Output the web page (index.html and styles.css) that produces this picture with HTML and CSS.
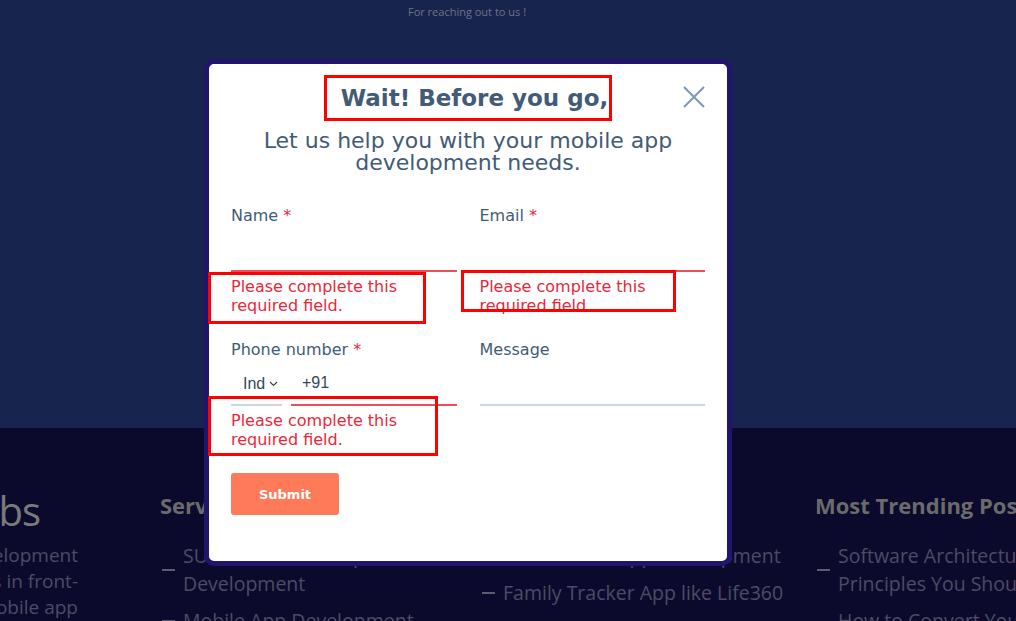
FILE: index.html
```html
<!DOCTYPE html>
<html lang="en">
  <head>
    <meta charset="UTF-8" />
    <title>Contact us</title>
    <link rel="stylesheet" href="styles.css">
  </head>
  <body>
    <section class="hero">
      <p class="thanks">For reaching out to us !</p>
    </section>

    <footer class="site-footer">
      <div class="col col-brand">
        <div class="logo">Mobile Labs</div>
        <p class="about">A software development<br>company that excels in front-<br>end, backend and mobile app</p>
      </div>

      <div class="col col-services">
        <h3>Services</h3>
        <ul class="links">
          <li><span>SUPER APP Marketplace Development</span></li>
          <li><span>Mobile App Development</span></li>
        </ul>
      </div>

      <div class="col">
        <h3>Solutions</h3>
        <ul class="links links-wide">
          <li><span>On-demand App Development</span></li>
          <li><span>Family Tracker App like Life360</span></li>
        </ul>
      </div>

      <div class="col">
        <h3>Most Trending Posts</h3>
        <ul class="links links-posts">
          <li><span>Software Architecture Principles You Should Know</span></li>
          <li><span>How to Convert Your Website into an App</span></li>
        </ul>
      </div>
    </footer>

    <div class="popup">
      <button class="close-btn" type="button" aria-label="Close">
        <svg width="22" height="22" viewBox="0 0 22 22">
          <path d="M1 1 L21 21 M21 1 L1 21" stroke="#7c98b6" stroke-width="2" fill="none" />
        </svg>
      </button>

      <h2 class="popup-title"><span class="mark-title">Wait! Before you go,</span></h2>
      <p class="popup-sub">Let us help you with your mobile app<br>development needs.</p>

      <form class="lead-form" onsubmit="return false">
        <div class="field">
          <label for="name">Name <span class="req">*</span></label>
          <input type="text" id="name" class="invalid" />
          <div class="error error-name">Please complete this required field.</div>
        </div>

        <div class="field">
          <label for="email">Email <span class="req">*</span></label>
          <input type="email" id="email" class="invalid" />
          <div class="error error-email">Please complete this required field.</div>
        </div>

        <div class="field">
          <label for="phone">Phone number <span class="req">*</span></label>
          <div class="phone-row">
            <div class="country">
              Ind
              <svg width="9" height="6" viewBox="0 0 9 6">
                <path d="M1 1 L4.5 4.5 L8 1" stroke="#33475b" stroke-width="1.2" fill="none" />
              </svg>
            </div>
            <input type="tel" id="phone" class="invalid" value="+91" />
          </div>
          <div class="error error-phone">Please complete this required field.</div>
        </div>

        <div class="field">
          <label for="message">Message</label>
          <textarea id="message"></textarea>
        </div>

        <button type="submit" class="submit-btn">Submit</button>
      </form>
    </div>
  </body>
</html>
```

FILE: styles.css
```css
body {
  margin: 0;
  width: 1016px;
  height: 621px;
  overflow: hidden;
  position: relative;
  font-family: "Open Sans", sans-serif;
  background-color: #0c0a2c;
}

/* page behind the popup */

.hero {
  height: 428px;
  background-color: #17244e;
  text-align: center;
}

.thanks {
  margin: 0;
  padding: 4px 82px 0 0;
  font-size: 11px;
  line-height: 16px;
  color: #6f7386;
}

.site-footer {
  display: flex;
  width: 1500px;
  margin-left: -222px;
  padding-top: 62px;
}

.col {
  width: 315px;
  margin-right: 20px;
  flex-shrink: 0;
}

.col-brand {
  width: 300px;
  margin-right: 82px;
  text-align: right;
}

.col-services {
  width: 300px;
}

.logo {
  margin: -5px 38px 0 0;
  font-size: 40px;
  line-height: 52px;
  font-weight: 500;
  color: #7a7a7a;
  letter-spacing: -1px;
}

.about {
  margin: 5px 0 0;
  font-size: 19px;
  line-height: 26px;
  color: #4d4b66;
}

.col h3 {
  margin: 0;
  font-size: 22px;
  line-height: 30px;
  font-weight: 700;
  color: #6b6b6b;
}

.links {
  list-style: none;
  margin: 22px 0 0;
  padding: 0;
  width: 270px;
}

.links-wide {
  width: 310px;
}

.links-posts {
  width: 280px;
}

.links li {
  display: flex;
  align-items: center;
  margin-bottom: 9px;
  padding-left: 2px;
  font-size: 19.5px;
  line-height: 28px;
  color: #4d4b66;
}

.links li::before {
  content: "";
  width: 13px;
  height: 2px;
  margin-right: 8px;
  flex-shrink: 0;
  background-color: #5d5b72;
}

/* popup */

.popup {
  position: absolute;
  left: 204px;
  top: 59px;
  width: 474px;
  padding: 12px 22px 46px;
  background-color: #fff;
  border: 5px solid #20146c;
  border-radius: 10px;
  font-family: "DejaVu Sans", sans-serif;
  color: #425b76;
}

.close-btn {
  position: absolute;
  top: 22px;
  right: 22px;
  width: 22px;
  height: 22px;
  padding: 0;
  border: none;
  background: none;
  cursor: pointer;
}

.close-btn svg {
  display: block;
}

.popup-title {
  margin: 0;
  text-align: center;
  font-size: 23px;
  line-height: 34px;
  font-weight: bold;
}

.mark-title {
  display: inline-block;
  padding: 3px 1px 3px 14px;
  border: 3px solid #ff0000;
  margin-top: -1px;
}

.popup-sub {
  margin: 9px 0 0;
  text-align: center;
  font-size: 22px;
  line-height: 22px;
}

.lead-form {
  display: grid;
  grid-template-columns: 1fr 1fr;
  column-gap: 23px;
  row-gap: 25px;
  margin-top: 32px;
}

.field label {
  display: block;
  font-size: 16px;
  line-height: 20px;
}

.req {
  color: #e8283a;
}

.field input,
.field textarea {
  display: block;
  width: 100%;
  height: 38px;
  margin-top: 8px;
  padding: 0 0 6px;
  box-sizing: border-box;
  border: none;
  border-bottom: 2px solid #cbd6e2;
  background: transparent;
  font-family: "Liberation Sans", sans-serif;
  font-size: 16px;
  color: #33475b;
  outline: none;
  resize: none;
}

.field input.invalid {
  border-bottom-color: #e9505c;
}

.phone-row {
  display: flex;
  gap: 9px;
  margin-top: 8px;
}

.phone-row .country {
  display: flex;
  align-items: center;
  gap: 4px;
  width: 51px;
  height: 38px;
  padding: 0 0 5px 12px;
  box-sizing: border-box;
  border-bottom: 2px solid #cbd6e2;
  font-family: "Liberation Sans", sans-serif;
  font-size: 16px;
  color: #33475b;
}

.phone-row input {
  flex: 1;
  margin-top: 0;
  padding-left: 11px;
}

.error {
  position: relative;
  margin-top: 5px;
  font-size: 16px;
  line-height: 19px;
  color: #e8283a;
}

.error::after {
  content: "";
  position: absolute;
  box-sizing: border-box;
  border: 3px solid #ff0000;
}

.error-name::after {
  left: -23px;
  top: -5px;
  width: 218px;
  height: 52px;
}

.error-email::after {
  left: -19px;
  top: -7px;
  width: 215px;
  height: 42px;
}

.error-phone::after {
  left: -23px;
  top: -15px;
  width: 230px;
  height: 60px;
}

.submit-btn {
  grid-column: 1;
  justify-self: start;
  width: 108px;
  height: 42px;
  margin-top: -1px;
  border: none;
  border-radius: 3px;
  background-color: #ff7a59;
  color: #fff;
  font-family: "DejaVu Sans", sans-serif;
  font-size: 13px;
  font-weight: bold;
  cursor: pointer;
}
```
